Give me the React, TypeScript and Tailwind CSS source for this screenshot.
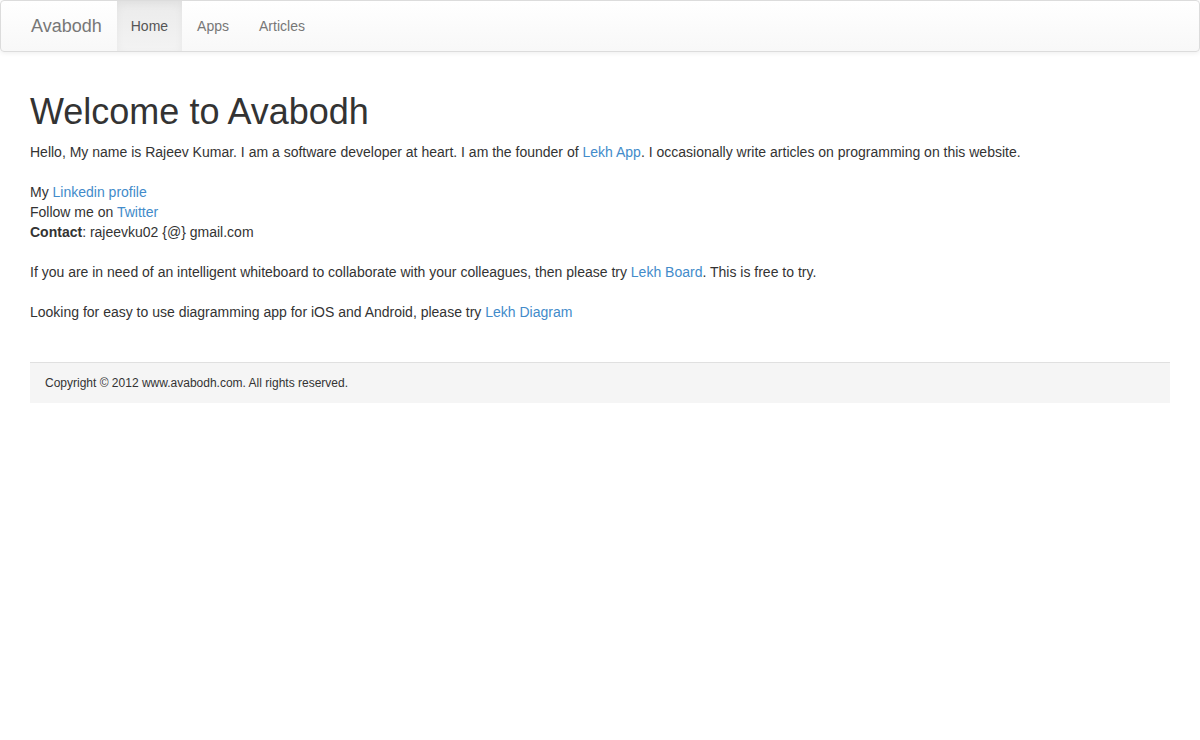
import React from "react";

export default function App() {
  const link = "text-[#428bca] hover:underline";
  return (
    <div className="min-h-[740px] bg-white text-[14px] leading-[20px] text-[#333]" style={{ fontFamily: '"Liberation Sans", Arial, sans-serif' }}>
      <nav className="h-[52px] rounded-[4px] border border-[#dcdcdc] bg-gradient-to-b from-white to-[#f8f8f8] shadow-[inset_0_1px_0_rgba(255,255,255,0.15),0_1px_5px_rgba(0,0,0,0.075)]">
        <div className="flex h-[50px] px-[15px]">
          <a className="block h-[50px] px-[15px] py-[15px] text-[18px] leading-[20px] text-[#777]">Avabodh</a>
          <ul className="flex">
            <li>
              <a className="block h-[50px] bg-gradient-to-b from-[#ebebeb] to-[#f3f3f3] px-[14px] py-[15px] text-[#555] shadow-[inset_0_3px_9px_rgba(0,0,0,0.05)]">Home</a>
            </li>
            <li>
              <a className="block h-[50px] px-[15px] py-[15px] text-[#777]">Apps</a>
            </li>
            <li>
              <a className="block h-[50px] px-[15px] py-[15px] text-[#777]">Articles</a>
            </li>
          </ul>
        </div>
      </nav>
      <div className="px-[30px] pt-[40px]">
        <h1 className="mb-[10px] text-[36px] leading-[1.1] font-normal text-[#333]">Welcome to Avabodh</h1>
        <p>
          Hello, My name is Rajeev Kumar. I am a software developer at heart. I am the founder of{" "}
          <a className={link}>Lekh App</a>. I occasionally write articles on programming on this website.
          <br />
          <br />
          My <a className={link}>Linkedin profile</a>
          <br />
          Follow me on <a className={link}>Twitter</a>
          <br />
          <b>Contact</b>: rajeevku02 {"{@}"} gmail.com
          <br />
          <br />
          If you are in need of an intelligent whiteboard to collaborate with your colleagues, then please try{" "}
          <a className={link}>Lekh Board</a>. This is free to try.
          <br />
          <br />
          Looking for easy to use diagramming app for iOS and Android, please try <a className={link}>Lekh Diagram</a>
        </p>
        <footer className="mt-[40px] border-t border-[#e0e0e0] bg-[#f5f5f5] px-[15px] py-[10px] text-[12px] leading-[20px] text-[#333]">
          Copyright © 2012 www.avabodh.com. All rights reserved.
        </footer>
      </div>
    </div>
  );
}
